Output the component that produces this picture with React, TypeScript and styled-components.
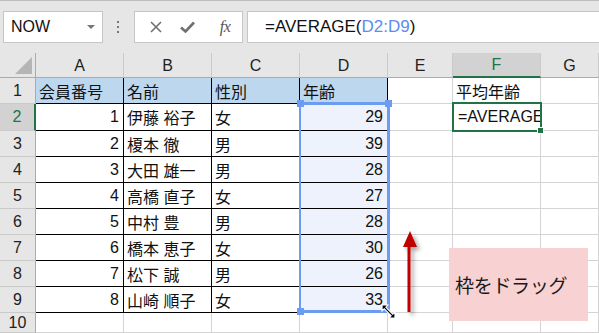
import React from "react";
import styled, { createGlobalStyle } from "styled-components";

const GlobalStyle = createGlobalStyle`
  html, body { margin: 0; padding: 0; background: #ffffff; }
  body { font-family: "Liberation Sans", "Noto Sans CJK JP", sans-serif; }
  * { box-sizing: border-box; }
`;

const GREEN = "#217346";
const BLUE = "#6b9cf0";
const HEAD_BG = "#e6e6e6";
const GRID = "#d4d4d4";

const Page = styled.div`
  position: relative;
  width: 599px;
  height: 333px;
  overflow: hidden;
  background: #fff;
  font-family: "Liberation Sans", "Noto Sans CJK JP", sans-serif;
`;

const Toolbar = styled.div`
  display: flex;
  align-items: center;
  height: 53px;
  padding: 0 0 0 3px;
  background: ${HEAD_BG};
  border-top: 1px solid #bdbdbd;
`;

const Box = styled.div`
  height: 32px;
  background: #fff;
  border: 1px solid #c6c6c6;
  display: flex;
  align-items: center;
`;

const NameBox = styled(Box)`
  width: 100px;
  padding: 0 6px 0 7px;
  justify-content: space-between;
  font-size: 16px;
  color: #111;
`;

const Caret = styled.span`
  width: 0;
  height: 0;
  border-left: 4px solid transparent;
  border-right: 4px solid transparent;
  border-top: 4px solid #777;
  margin-right: 1px;
`;

const Dots = styled.div`
  margin-left: 14px;
  width: 3px;
  display: flex;
  flex-direction: column;
  gap: 3px;
  & > span {
    width: 2px;
    height: 2px;
    background: #777;
  }
`;

const FxBox = styled(Box)`
  margin-left: 14px;
  width: 109px;
  padding: 0 0 0 12px;
`;

const IconSlot = styled.span<{ $w: number }>`
  width: ${(p) => p.$w}px;
  display: flex;
  align-items: center;
  justify-content: center;
`;

const FxText = styled.span`
  font-family: "Liberation Serif", serif;
  font-style: italic;
  font-size: 16px;
  color: #555;
  letter-spacing: -0.5px;
`;

const FormulaBox = styled(Box)`
  margin-left: 4px;
  flex: 1;
  border-right: none;
  padding-left: 17px;
  font-size: 17px;
  color: #111;
`;

const Ref = styled.span`
  color: #5b8def;
`;

const Sheet = styled.div`
  position: relative;
  display: grid;
  grid-template-columns: 36px 88px 88px 88px 88px 65px 88px 1fr;
  grid-template-rows: 25px 26px 27px repeat(7, 26px) 20px;
`;

const ColHead = styled.div<{ $sel?: boolean }>`
  background: ${(p) => (p.$sel ? "#d2d2d2" : HEAD_BG)};
  color: ${(p) => (p.$sel ? GREEN : "#222")};
  border-right: 1px solid #cacaca;
  border-bottom: ${(p) => (p.$sel ? `2px solid ${GREEN}` : "1px solid #ababab")};
  display: flex;
  align-items: center;
  justify-content: center;
  font-size: 16px;
  padding-top: 1px;
`;

const Corner = styled.div`
  background: ${HEAD_BG};
  border-right: 1px solid #ababab;
  border-bottom: 1px solid #ababab;
  display: flex;
  align-items: flex-end;
  justify-content: flex-end;
  padding: 0 3px 3px 0;
  & > span {
    width: 0;
    height: 0;
    border-left: 17px solid transparent;
    border-bottom: 17px solid #b5b5b5;
  }
`;

const RowHead = styled.div<{ $sel?: boolean }>`
  background: ${(p) => (p.$sel ? "#d2d2d2" : HEAD_BG)};
  color: ${(p) => (p.$sel ? GREEN : "#222")};
  border-right: ${(p) => (p.$sel ? `2px solid ${GREEN}` : "1px solid #ababab")};
  border-bottom: 1px solid #cacaca;
  display: flex;
  align-items: center;
  justify-content: center;
  font-size: 16px;
`;

const Cell = styled.div<{ $table?: boolean; $bg?: string; $right?: boolean }>`
  background: ${(p) => p.$bg || "#fff"};
  border-right: 1px solid ${(p) => (p.$table ? "#000" : GRID)};
  border-bottom: 1px solid ${(p) => (p.$table ? "#000" : GRID)};
  display: flex;
  align-items: center;
  justify-content: ${(p) => (p.$right ? "flex-end" : "flex-start")};
  padding: 0 4px 0 3px;
  font-size: 16px;
  color: #111;
  white-space: nowrap;
  overflow: hidden;
`;

const ActiveText = styled.span`
  padding-left: 2px;
  font-size: 16px;
`;

const Selection = styled.div`
  position: absolute;
  left: 299px;
  top: 49px;
  width: 91px;
  height: 211px;
  border: 3px solid ${BLUE};
  border-left-width: 2px;
  pointer-events: none;
`;

const Handle = styled.span<{ $x: "l" | "r"; $y: "t" | "b" }>`
  position: absolute;
  width: 7px;
  height: 7px;
  background: ${BLUE};
  ${(p) => (p.$x === "l" ? "left: -4px;" : "right: -5px;")}
  ${(p) => (p.$y === "t" ? "top: -5px;" : "bottom: -5px;")}
`;

const ResizeCursor = styled.svg`
  position: absolute;
  right: -9px;
  bottom: -9px;
`;

const ActiveCell = styled.div`
  position: absolute;
  left: 452px;
  top: 49px;
  width: 90px;
  height: 30px;
  border: 2px solid ${GREEN};
  pointer-events: none;
  & > span {
    position: absolute;
    right: -4px;
    bottom: -4px;
    width: 5px;
    height: 5px;
    background: ${GREEN};
    border: 1px solid #fff;
    box-sizing: content-box;
  }
`;

const Arrow = styled.svg`
  position: absolute;
  left: 395px;
  top: 172px;
`;

const Callout = styled.div`
  position: absolute;
  left: 449px;
  top: 248px;
  width: 139px;
  height: 73px;
  background: #f8d1d2;
  display: flex;
  align-items: center;
  padding-left: 6px;
  font-family: "Noto Sans CJK JP", sans-serif;
  font-size: 19px;
  color: #1a1a1a;
  letter-spacing: -0.3px;
`;

type Row = { no: number; name: string; sex: string; age: number };

const rows: Row[] = [
  { no: 1, name: "伊藤 裕子", sex: "女", age: 29 },
  { no: 2, name: "榎本 徹", sex: "男", age: 39 },
  { no: 3, name: "大田 雄一", sex: "男", age: 28 },
  { no: 4, name: "高橋 直子", sex: "女", age: 27 },
  { no: 5, name: "中村 豊", sex: "男", age: 28 },
  { no: 6, name: "橋本 恵子", sex: "女", age: 30 },
  { no: 7, name: "松下 誠", sex: "男", age: 26 },
  { no: 8, name: "山崎 順子", sex: "女", age: 33 },
];

const cols = ["A", "B", "C", "D", "E", "F", "G"];
const HEADER_BLUE = "#bdd7ee";
const SEL_BG = "#edf2fc";

export default function App() {
  return (
    <Page>
      <GlobalStyle />
      <Toolbar>
        <NameBox>
          <span>NOW</span>
          <Caret />
        </NameBox>
        <Dots>
          <span />
          <span />
          <span />
        </Dots>
        <FxBox>
          <IconSlot $w={17}>
            <svg width="12" height="12" viewBox="0 0 12 12">
              <path d="M1 1 L11 11 M11 1 L1 11" stroke="#707070" strokeWidth="1.6" fill="none" />
            </svg>
          </IconSlot>
          <IconSlot $w={46}>
            <svg width="15" height="12" viewBox="0 0 15 12">
              <path d="M1 6.5 L5.5 10.5 L14 1.5" stroke="#707070" strokeWidth="2.6" fill="none" />
            </svg>
          </IconSlot>
          <IconSlot $w={30}>
            <FxText>fx</FxText>
          </IconSlot>
        </FxBox>
        <FormulaBox>
          =AVERAGE(<Ref>D2:D9</Ref>)
        </FormulaBox>
      </Toolbar>

      <Sheet>
        <Corner>
          <span />
        </Corner>
        {cols.map((c) => (
          <ColHead key={c} $sel={c === "F"}>
            {c}
          </ColHead>
        ))}

        <RowHead>1</RowHead>
        <Cell $table $bg={HEADER_BLUE}>会員番号</Cell>
        <Cell $table $bg={HEADER_BLUE}>名前</Cell>
        <Cell $table $bg={HEADER_BLUE}>性別</Cell>
        <Cell $table $bg={HEADER_BLUE}>年齢</Cell>
        <Cell />
        <Cell>平均年齢</Cell>
        <Cell />

        {rows.map((r, i) => (
          <React.Fragment key={i}>
            <RowHead $sel={i === 0}>{i + 2}</RowHead>
            <Cell $table $right>
              {r.no}
            </Cell>
            <Cell $table>{r.name}</Cell>
            <Cell $table>{r.sex}</Cell>
            <Cell $table $right $bg={SEL_BG}>
              {r.age}
            </Cell>
            <Cell />
            <Cell>{i === 0 ? <ActiveText>=AVERAGE</ActiveText> : null}</Cell>
            <Cell />
          </React.Fragment>
        ))}

        <RowHead>10</RowHead>
        {cols.map((c) => (
          <Cell key={c} />
        ))}

        <Selection>
          <Handle $x="l" $y="t" />
          <Handle $x="r" $y="t" />
          <Handle $x="l" $y="b" />
          <ResizeCursor width="15" height="15" viewBox="0 0 14 14">
            <path
              d="M1 1 L6.5 1 L4.5 3 L11 9.5 L13 7.5 L13 13 L7.5 13 L9.5 11 L3 4.5 L1 6.5 Z"
              fill="#000"
              stroke="#fff"
              strokeWidth="1"
            />
          </ResizeCursor>
        </Selection>

        <ActiveCell>
          <span />
        </ActiveCell>

        <Arrow width="34" height="100" viewBox="0 0 34 100">
          <defs>
            <filter id="sh" x="-50%" y="-20%" width="200%" height="140%">
              <feDropShadow dx="3" dy="3" stdDeviation="2" floodColor="#000" floodOpacity="0.35" />
            </filter>
          </defs>
          <g filter="url(#sh)">
            <path d="M14 20 L14 87" stroke="#c00000" strokeWidth="3" fill="none" />
            <path d="M8 22 L22 22 L15 6 Z" fill="#c00000" />
          </g>
        </Arrow>
      </Sheet>

      <Callout>枠をドラッグ</Callout>
    </Page>
  );
}
